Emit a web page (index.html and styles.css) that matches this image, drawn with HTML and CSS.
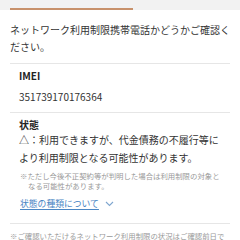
FILE: index.html
```html
<!DOCTYPE html>
<html lang="ja">
<head>
    <meta charset="UTF-8">
    <meta name="viewport" content="width=device-width, initial-scale=1.0">
    <title>ネットワーク利用制限確認</title>
    <link rel="stylesheet" href="styles.css">
</head>
<body>
    <div class="tabbar">
        <span class="tab-line"></span>
    </div>

    <main class="content">
        <p class="lead">ネットワーク利用制限携帯電話かどうかご確認ください。</p>

        <dl class="result">
            <div class="row">
                <dt>IMEI</dt>
                <dd class="imei">351739170176364</dd>
            </div>
            <div class="row">
                <dt class="status-label">状態</dt>
                <dd>
                    <p class="status">△：利用できますが、代金債務の不履行等により利用制限となる可能性があります。</p>
                    <p class="note">※ただし今後不正契約等が判明した場合は利用制限の対象となる可能性があります。</p>
                    <a class="more" href="#">状態の種類について
                        <svg class="chevron" width="9" height="6" viewBox="0 0 9 6"><path d="M1 1 L4.5 4.5 L8 1" fill="none" stroke="#7fa6cf" stroke-width="1.1"/></svg>
                    </a>
                </dd>
            </div>
        </dl>

        <p class="foot-note">※ご確認いただけるネットワーク利用制限の状況はご確認前日で</p>
    </main>
</body>
</html>
```

FILE: styles.css
```css
body {
    margin: 0;
    background: #fff;
    color: #333;
    font-family: "Noto Sans CJK JP", "Noto Sans", sans-serif;
}

.tabbar {
    height: 10px;
    background: #f2f2f2;
    padding: 0 10px;
    display: flex;
    align-items: flex-end;
}

.tab-line {
    width: 123px;
    height: 2px;
    background: #c8916b;
}

.content {
    padding: 0 10px;
}

.lead {
    margin: 11px 0 8px;
    font-size: 10px;
    line-height: 17px;
}

.result {
    margin: 0;
}

.row {
    border-top: 1px solid #e6e6e6;
    padding: 4px 9px 7px;
}

.row dt {
    font-size: 10px;
    line-height: 16px;
    font-weight: bold;
    color: #222;
}

.row dd {
    margin: 0;
    font-size: 10px;
}

.imei {
    margin-top: 5px !important;
    line-height: 16px;
}

.row + .row {
    padding: 5px 9px 12px;
}

.status-label {
    line-height: 14px !important;
}

.status {
    margin: -1px 0 0;
    font-size: 10px;
    line-height: 17.5px;
}

.note {
    margin: 4.5px 0 0 1px;
    padding-left: 8px;
    text-indent: -8px;
    font-size: 7.4px;
    line-height: 10.5px;
    color: #999;
}

.more {
    display: flex;
    align-items: center;
    gap: 6px;
    width: max-content;
    margin-top: 5px;
    margin-left: 1px;
    font-size: 8.8px;
    line-height: 14px;
    color: #4a86c4;
    text-decoration: underline;
    text-underline-offset: 2px;
}

.foot-note {
    margin: 0;
    border-top: 1px solid #e6e6e6;
    padding-top: 6.5px;
    font-size: 7.4px;
    line-height: 11px;
    color: #999;
}
```
